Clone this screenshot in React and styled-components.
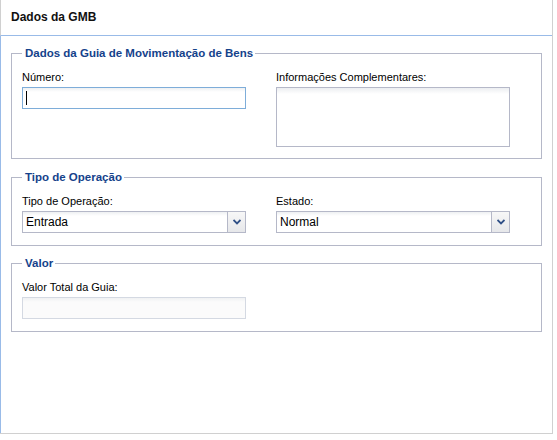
import React from "react";
import styled, { createGlobalStyle } from "styled-components";

const GlobalStyle = createGlobalStyle`
  html, body {
    margin: 0;
    padding: 0;
    background: #ffffff;
  }
  body {
    font-family: "Liberation Sans", Arial, sans-serif;
    color: #000;
  }
`;

const Panel = styled.div`
  width: 553px;
  height: 434px;
  box-sizing: border-box;
  border-right: 1px solid #d0d0d0;
  border-bottom: 1px solid #d0d0d0;
  display: flex;
  flex-direction: column;
  background: #fff;
`;

const Header = styled.div`
  height: 36px;
  flex: none;
  box-sizing: border-box;
  border-left: 1px solid #d0d0d0;
  border-bottom: 1px solid #99bbe8;
  padding: 0 0 1px 10px;
  display: flex;
  align-items: center;
  font-size: 12px;
  font-weight: bold;
  color: #111;
`;

const Body = styled.div`
  flex: 1;
  border-left: 1px solid #99bbe8;
  padding: 0 10px;
  display: flex;
  flex-direction: column;
`;

const Fieldset = styled.fieldset`
  margin: ${(p) => p.$top}px 0 0 0;
  border: 1px solid #b5b8c8;
  padding: 10px 10px ${(p) => p.$bottom}px 10px;
  min-width: 0;
`;

const Legend = styled.legend`
  padding: 0 2px 0 3px;
  margin-left: 0;
  height: 14px;
  font-size: 11.5px;
  line-height: 14px;
  font-weight: bold;
  color: #15428b;
`;

const Row = styled.div`
  display: grid;
  grid-template-columns: 254px 1fr;
  align-items: start;
`;

const Field = styled.div`
  display: flex;
  flex-direction: column;
  gap: 3px;
`;

const Label = styled.label`
  display: block;
  height: 14px;
  font-size: 11px;
  line-height: 14px;
  color: #000;
`;

const InputWrap = styled.div`
  position: relative;
  width: 224px;
  height: 22px;
`;

const TextInput = styled.input`
  display: block;
  box-sizing: border-box;
  width: 224px;
  height: 22px;
  margin: 0;
  padding: 1px 3px;
  font-family: "Liberation Sans", Arial, sans-serif;
  font-size: 12px;
  border: 1px solid ${(p) => (p.$focus ? "#7eadd9" : "#b5b8c8")};
  background: linear-gradient(#eef0f2 0px, #fff 4px, #fff 100%);
  outline: none;
  &:disabled {
    border-color: #d4d9e2;
    background: linear-gradient(#f0f1f3 0px, #fbfbfb 4px, #fbfbfb 100%);
  }
`;

const Caret = styled.span`
  position: absolute;
  left: 4px;
  top: 4px;
  width: 1px;
  height: 14px;
  background: #000;
`;

const TextArea = styled.textarea`
  box-sizing: border-box;
  width: 234px;
  height: 60px;
  margin: 0;
  padding: 2px 3px;
  resize: none;
  display: block;
  border: 1px solid #b5b8c8;
  background: linear-gradient(#eceef1 0px, #fff 6px, #fff 100%);
  outline: none;
`;

const Combo = styled.div`
  box-sizing: border-box;
  width: ${(p) => p.$width}px;
  height: 22px;
  display: flex;
  border: 1px solid #b5b8c8;
  background: linear-gradient(#eef0f2 0px, #fff 4px, #fff 100%);
`;

const ComboText = styled.div`
  flex: 1;
  padding-left: 3px;
  font-size: 12px;
  line-height: 21px;
  color: #000;
`;

const Trigger = styled.div`
  width: 17px;
  border-left: 1px solid #b5b8c8;
  background: linear-gradient(#f7f7f7, #e6e7ea);
  display: flex;
  align-items: center;
  justify-content: center;
`;

const ComboBox = ({ value, width }) => (
  <Combo $width={width}>
    <ComboText>{value}</ComboText>
    <Trigger>
      <svg width="8" height="6" viewBox="0 0 8 6">
        <path d="M0.5 1 L4 4.5 L7.5 1" fill="none" stroke="#2f4f86" strokeWidth="1.8" />
      </svg>
    </Trigger>
  </Combo>
);

export default function App() {
  return (
    <>
      <GlobalStyle />
      <Panel>
        <Header>Dados da GMB</Header>
        <Body>
          <Fieldset $top={10} $bottom={11}>
            <Legend>Dados da Guia de Movimentação de Bens</Legend>
            <Row>
              <Field>
                <Label>Número:</Label>
                <InputWrap>
                  <TextInput $focus defaultValue="" />
                  <Caret />
                </InputWrap>
              </Field>
              <Field>
                <Label>Informações Complementares:</Label>
                <TextArea />
              </Field>
            </Row>
          </Fieldset>
          <Fieldset $top={11} $bottom={12}>
            <Legend>Tipo de Operação</Legend>
            <Row>
              <Field>
                <Label>Tipo de Operação:</Label>
                <ComboBox value="Entrada" width={224} />
              </Field>
              <Field>
                <Label>Estado:</Label>
                <ComboBox value="Normal" width={234} />
              </Field>
            </Row>
          </Fieldset>
          <Fieldset $top={10} $bottom={12}>
            <Legend>Valor</Legend>
            <Row>
              <Field>
                <Label>Valor Total da Guia:</Label>
                <InputWrap>
                  <TextInput disabled />
                </InputWrap>
              </Field>
            </Row>
          </Fieldset>
        </Body>
      </Panel>
    </>
  );
}
